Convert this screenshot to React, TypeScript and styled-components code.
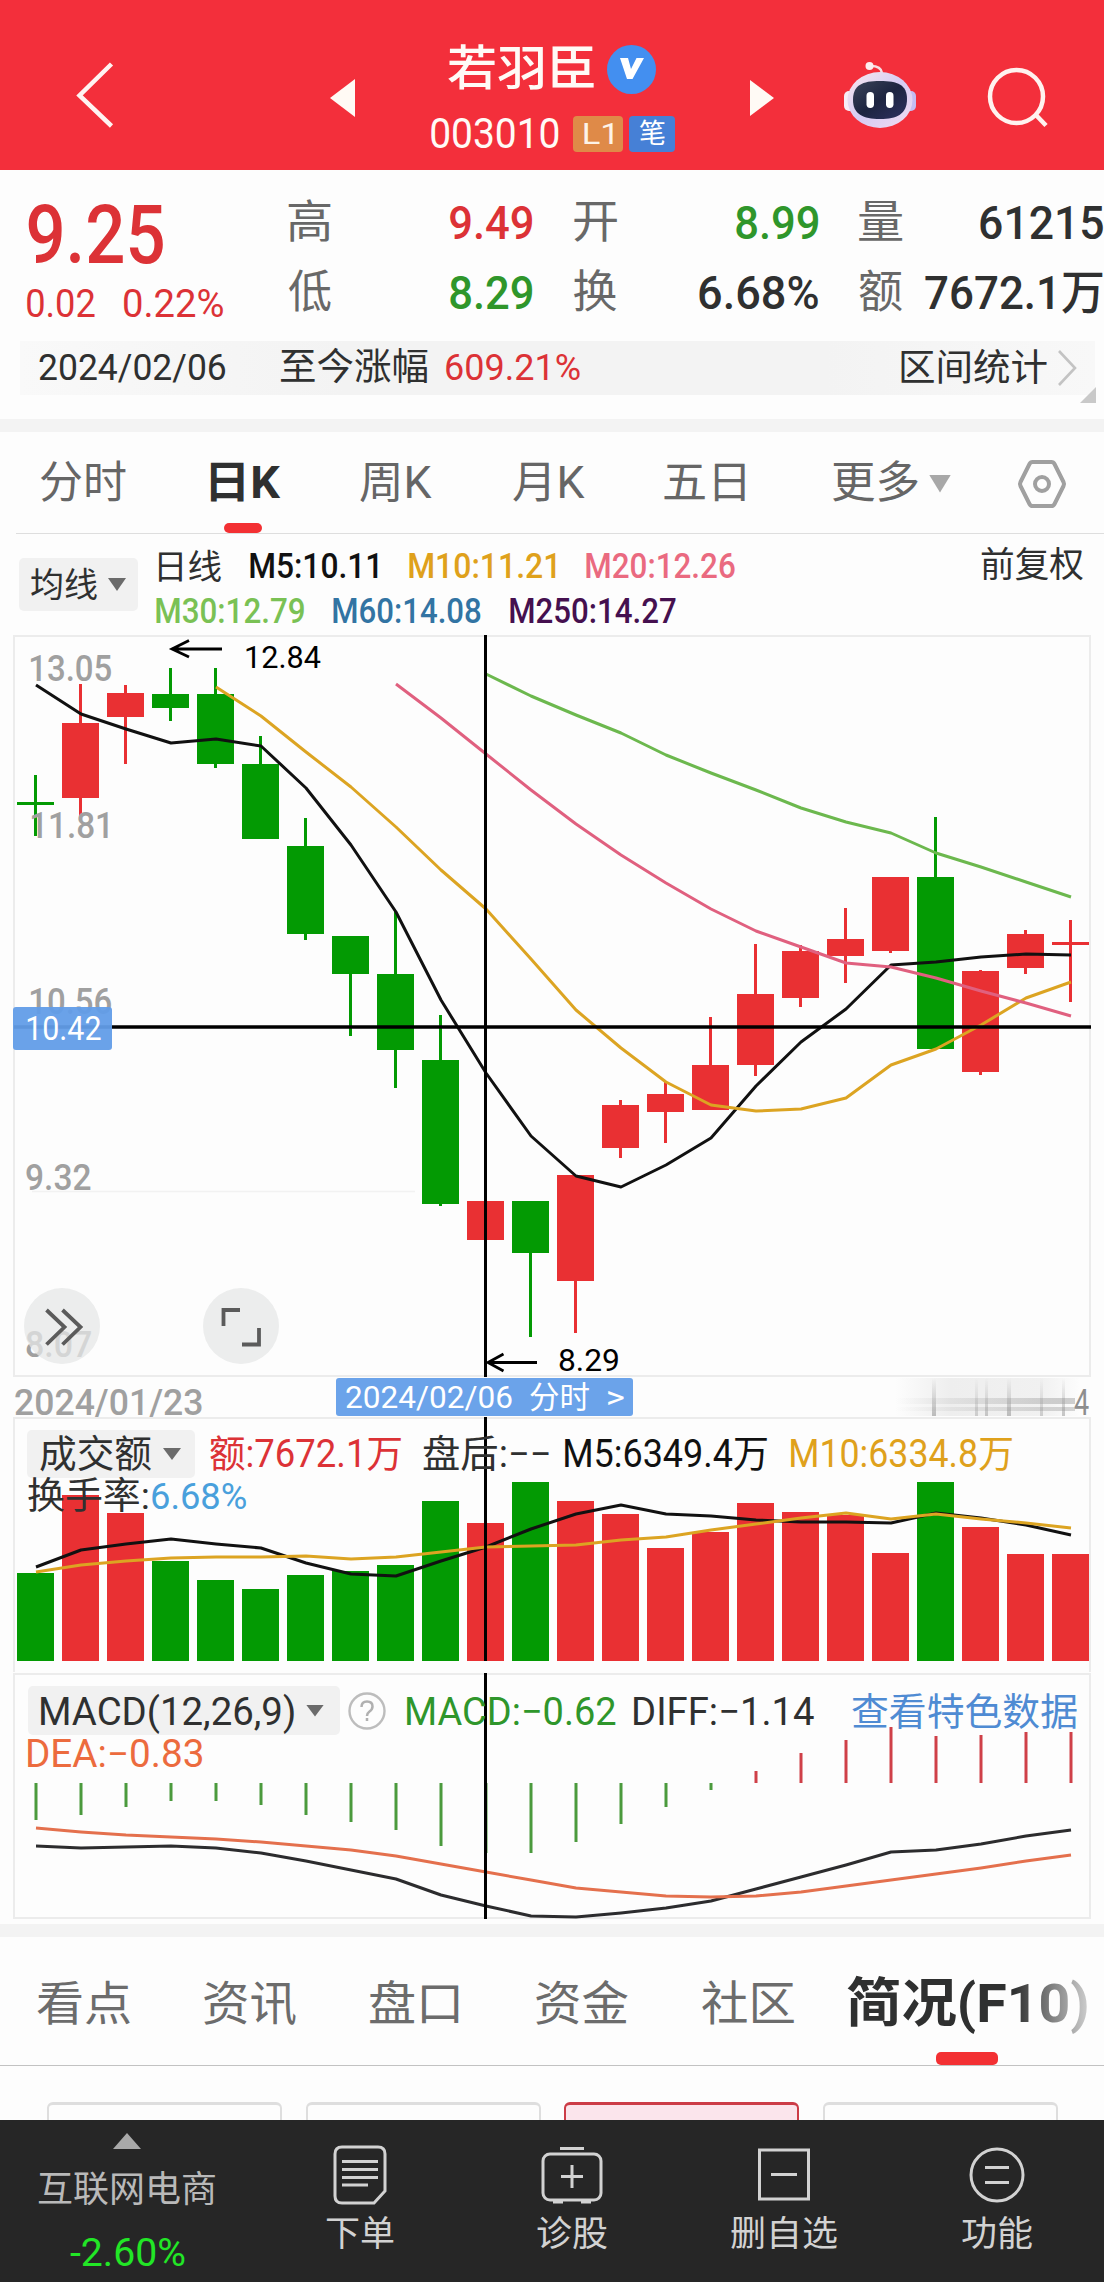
import React, { useLayoutEffect, useRef, useState } from "react";
import styled, { createGlobalStyle } from "styled-components";

const GlobalStyle = createGlobalStyle`
  * { box-sizing: border-box; }
  body { margin: 0; background: #fdfdfd; }
`;

const FONT = `Roboto, "Noto Sans CJK SC", sans-serif`;
const RED = "#dc3236";
const GREEN = "#2f962b";
const UP = "#e93033";
const DOWN = "#039a03";
const INK = "#2f3030";
const GOLD = "#dfa11c";
const FRAME = "#ececec";

/* ---------- text fitted to a given width ---------- */

const FitBox = styled.span<{ $w: number; $ml: number; $size: number; $color: string; $weight: number; $dy: number }>`
  display: block;
  flex: none;
  width: ${(p) => p.$w}px;
  height: ${(p) => Math.round(p.$size * 1.2)}px;
  line-height: ${(p) => Math.round(p.$size * 1.2)}px;
  margin-left: ${(p) => p.$ml}px;
  margin-top: ${(p) => p.$dy}px;
  font-size: ${(p) => p.$size}px;
  font-weight: ${(p) => p.$weight};
  color: ${(p) => p.$color};
`;

const FitInner = styled.span`
  display: inline-block;
  white-space: pre;
  transform-origin: 0 50%;
`;

type FitProps = { children: string; w: number; size: number; color?: string; weight?: number; ml?: number; dy?: number };

function Fit({ children, w, size, color = INK, weight = 400, ml = 0, dy = 0 }: FitProps) {
  const ref = useRef<HTMLSpanElement>(null);
  const [fit, setFit] = useState({ shift: 0, scale: 1 });
  useLayoutEffect(() => {
    const ctx = document.createElement("canvas").getContext("2d");
    if (!ctx || !ref.current) return;
    const cs = getComputedStyle(ref.current);
    ctx.font = `${cs.fontWeight} ${cs.fontSize} ${cs.fontFamily}`;
    const m = ctx.measureText(children);
    const scale = w / (m.actualBoundingBoxLeft + m.actualBoundingBoxRight);
    setFit({ shift: m.actualBoundingBoxLeft * scale, scale });
  }, [children, w]);
  return (
    <FitBox $w={w} $ml={ml} $size={size} $color={color} $weight={weight} $dy={dy}>
      <FitInner ref={ref} style={{ transform: `translateX(${fit.shift}px) scaleX(${fit.scale})` }}>
        {children}
      </FitInner>
    </FitBox>
  );
}

/* ---------- page ---------- */

const Page = styled.div`
  width: 1104px;
  height: 2282px;
  overflow: hidden;
  background: #fdfdfd;
  font-family: ${FONT};
  display: flex;
  flex-direction: column;
  > * { flex: none; }
`;

const Header = styled.header`
  height: 170px;
  background: #f32f3b;
  display: flex;
  align-items: flex-start;
`;

const Icon = styled.svg<{ $ml?: number; $mt?: number }>`
  display: block;
  flex: none;
  margin-left: ${(p) => p.$ml ?? 0}px;
  margin-top: ${(p) => p.$mt ?? 0}px;
  overflow: visible;
`;

const TitleBlock = styled.div`
  flex: none;
  width: 244px;
  margin-left: 75px;
  padding-top: 37px;
`;

const TitleRow = styled.div<{ $h: number; $pl: number }>`
  display: flex;
  align-items: center;
  height: ${(p) => p.$h}px;
  padding-left: ${(p) => p.$pl}px;
`;

const Verified = styled.span`
  width: 49px;
  height: 49px;
  margin-left: 13px;
  border-radius: 50%;
  background: #438ff0;
  display: flex;
  align-items: center;
  justify-content: center;
`;

const Tag = styled.span<{ $bg: string; $w: number; $ml: number }>`
  width: ${(p) => p.$w}px;
  height: 36px;
  margin-left: ${(p) => p.$ml}px;
  border-radius: 4px;
  background: ${(p) => p.$bg};
  display: flex;
  align-items: center;
  justify-content: center;
`;

/* ---------- quote ---------- */

const Quote = styled.section`
  height: 171px;
  display: flex;
  padding-top: 16px;
`;

const PriceBlock = styled.div`
  flex: none;
  width: 288px;
`;

const PriceRow = styled.div<{ $h: number }>`
  height: ${(p) => p.$h}px;
  display: flex;
  align-items: center;
`;

const StatColumn = styled.div`
  flex: none;
  width: 244px;
  margin-right: 41.5px;
  padding-top: 2px;
`;

const Stat = styled.div`
  height: 70px;
  display: flex;
  align-items: center;
  justify-content: space-between;
`;

const RangeBar = styled.div`
  height: 54px;
  margin: 0 9px 24px 20px;
  background: linear-gradient(90deg, #f9f9f9, #f3f3f3 30%, #f3f3f3 75%, #f8f8f8);
  display: flex;
  align-items: center;
  position: relative;
`;

const Corner = styled.span`
  position: absolute;
  right: -1px;
  bottom: -8px;
  width: 16px;
  height: 16px;
  background: #c9c9c9;
  clip-path: polygon(100% 0, 100% 100%, 0 100%);
`;

const Band = styled.div`
  height: 13px;
  background: #f3f3f3;
`;

/* ---------- tabs ---------- */

const Tabs = styled.nav`
  height: 102px;
  margin-left: 16px;
  padding-top: 2px;
  border-bottom: 1px solid #dedede;
  display: flex;
  align-items: center;
  position: relative;
`;

const Underline = styled.span<{ $x: number; $w: number; $h: number; $b: number }>`
  position: absolute;
  left: ${(p) => p.$x}px;
  bottom: ${(p) => p.$b}px;
  width: ${(p) => p.$w}px;
  height: ${(p) => p.$h}px;
  border-radius: 5px;
  background: #f33033;
`;

const Caret = styled.span<{ $w: number; $h: number; $ml: number; $color: string }>`
  flex: none;
  width: ${(p) => p.$w}px;
  height: ${(p) => p.$h}px;
  margin-left: ${(p) => p.$ml}px;
  background: ${(p) => p.$color};
  clip-path: polygon(0 0, 100% 0, 50% 100%);
`;

/* ---------- average line legend ---------- */

const AverageLegend = styled.section`
  height: 101px;
  display: flex;
  padding-top: 10px;
`;

const Selector = styled.button<{ $w: number; $h: number; $pl: number; $ml: number; $mt: number }>`
  flex: none;
  width: ${(p) => p.$w}px;
  height: ${(p) => p.$h}px;
  padding: 0 0 0 ${(p) => p.$pl}px;
  margin: ${(p) => p.$mt}px 0 0 ${(p) => p.$ml}px;
  border: 0;
  border-radius: 5px;
  background: #f1f1f1;
  font-family: inherit;
  display: flex;
  align-items: center;
  text-align: left;
`;

const LegendRows = styled.div`
  flex: 1;
`;

const LegendRow = styled.div<{ $h: number }>`
  height: ${(p) => p.$h}px;
  display: flex;
  align-items: center;
`;

/* ---------- chart panels ---------- */

const Panel = styled.section<{ $h: number }>`
  height: ${(p) => p.$h}px;
  display: grid;
  position: relative;
  > * { grid-area: 1 / 1; }
`;

const Plot = styled.svg`
  display: block;
`;

const PlotLabel = styled.span<{ $x: number; $y: number; $h: number }>`
  position: absolute;
  left: ${(p) => p.$x}px;
  top: ${(p) => p.$y}px;
  height: ${(p) => p.$h}px;
  display: flex;
  align-items: center;
`;

const CursorPrice = styled.span`
  position: absolute;
  left: 13px;
  top: 372px;
  width: 99px;
  height: 43px;
  border-radius: 3px;
  background: rgba(98, 157, 232, 0.95);
  display: flex;
  align-items: center;
`;

const RoundButton = styled.button<{ $x: number }>`
  position: absolute;
  left: ${(p) => p.$x}px;
  top: 653px;
  width: 76px;
  height: 76px;
  padding: 0;
  border: 0;
  border-radius: 50%;
  background: rgba(230, 231, 231, 0.75);
`;

const DateAxis = styled.div`
  height: 40px;
  display: flex;
  align-items: center;
`;

const CursorDate = styled.span`
  width: 297px;
  height: 38px;
  margin-left: 134px;
  border-radius: 3px;
  background: #6ba3ea;
  display: flex;
  align-items: center;
`;

const Smudge = styled.span`
  width: 185px;
  height: 38px;
  margin-left: 262px;
  background:
    linear-gradient(90deg, transparent, rgba(140, 140, 140, 0.4) 92%) 0 20px / 180px 6px no-repeat,
    linear-gradient(90deg, transparent, rgba(140, 140, 140, 0.35) 92%) 0 29px / 180px 4px no-repeat,
    linear-gradient(#fff0, #bbb) 37px 0 / 4px 38px no-repeat,
    linear-gradient(#fff0, #ccc) 80px 0 / 3px 38px no-repeat,
    linear-gradient(#fff0, #c4c4c4) 90px 0 / 3px 38px no-repeat,
    linear-gradient(#fff0, #bbb) 112px 0 / 4px 38px no-repeat,
    linear-gradient(#fff0, #ccc) 145px 0 / 3px 38px no-repeat,
    linear-gradient(#fff0, #c4c4c4) 167px 0 / 3px 38px no-repeat,
    linear-gradient(90deg, #fff0, #eeeeee 30%, #f1f1f1 80%, #fff0);
`;

const Legends = styled.div<{ $pt: number }>`
  padding-top: ${(p) => p.$pt}px;
`;

const CrossLine = styled.span<{ $h: number }>`
  width: 3px;
  height: ${(p) => p.$h}px;
  margin-left: 484px;
  background: #000;
`;

/* ---------- info tabs ---------- */

const InfoTabs = styled.nav`
  height: 129px;
  padding-top: 5px;
  border-bottom: 1px solid #c2c2c2;
  display: flex;
  align-items: center;
  position: relative;
`;

const FadeEdge = styled.span`
  position: absolute;
  right: 0;
  top: 30px;
  width: 90px;
  height: 80px;
  background: linear-gradient(90deg, #fdfdfd00, #fdfdfdee);
`;

const Cards = styled.div`
  height: 54px;
  padding: 36px 47px 0 47px;
  display: grid;
  grid-template-columns: repeat(4, 235px);
  column-gap: 23.5px;
  overflow: hidden;
`;

const Card = styled.div<{ $on?: boolean }>`
  height: 60px;
  border: 3px solid ${(p) => (p.$on ? "#cc3c47" : "#dedede")};
  border-left-width: 2px;
  border-right-width: 2px;
  border-radius: 6px;
  background: ${(p) => (p.$on ? "#fbe5ec" : "transparent")};
`;

/* ---------- bottom bar ---------- */

const BottomBar = styled.footer`
  height: 162px;
  background: #262626;
  display: flex;
`;

const Sector = styled.div`
  width: 255px;
  display: flex;
  flex-direction: column;
`;

const Action = styled.div<{ $w: number }>`
  width: ${(p) => p.$w}px;
  display: flex;
  flex-direction: column;
  align-items: center;
`;

const ActionIcon = styled.div`
  height: 92px;
  padding-top: 18px;
  display: flex;
  align-items: center;
`;

/* ---------- data ---------- */

const STEP = 45;
const cx = (i: number) => 35.5 + STEP * i;

// [rising, high, top of body, bottom of body, low] in plot pixels
const CANDLES: [number, number, number, number, number][] = [
  [0, 775, 802, 805, 836], [1, 684, 723, 798, 818], [1, 685, 693, 717, 764], [0, 668, 694, 708, 721],
  [0, 668, 694, 764, 768], [0, 736, 764, 839, 839], [0, 818, 846, 934, 940], [0, 936, 936, 974, 1036],
  [0, 912, 974, 1050, 1088], [0, 1015, 1060, 1204, 1206], [1, 1201, 1201, 1240, 1240], [0, 1201, 1201, 1253, 1337],
  [1, 1175, 1175, 1281, 1333], [1, 1100, 1105, 1148, 1158], [1, 1082, 1094, 1112, 1143], [1, 1017, 1065, 1110, 1110],
  [1, 944, 994, 1065, 1076], [1, 945, 951, 998, 1007], [1, 908, 939, 956, 983], [1, 877, 877, 951, 953],
  [0, 817, 877, 1049, 1049], [1, 970, 971, 1072, 1075], [1, 930, 934, 968, 974], [1, 920, 942, 945, 1002],
];
const MA5 = [685, 714, 729, 743, 739, 746, 788, 845, 912, 1000, 1073, 1136, 1176, 1187, 1165, 1138, 1086, 1042, 1009, 965, 962, 957, 954, 955];
const MA10 = [687, 716, 752, 787, 827, 870, 909, 959, 1010, 1048, 1082, 1105, 1111, 1109, 1098, 1065, 1049, 1025, 998, 982];
const MA20 = [684, 718, 754, 790, 824, 855, 883, 909, 931, 947, 963, 967, 978, 991, 1003, 1016];
const MA30 = [674, 696, 715, 733, 755, 773, 790, 808, 822, 833, 853, 867, 882, 897];

const VOLUME = [1573, 1495, 1513, 1561, 1580, 1589, 1575, 1571, 1565, 1501, 1523, 1482, 1501, 1514, 1548, 1532, 1503, 1512, 1515, 1553, 1482, 1527, 1554, 1554];
const VOL5 = [1567, 1550, 1544, 1539, 1544, 1548, 1563, 1574, 1576, 1561, 1547, 1529, 1514, 1505, 1514, 1516, 1520, 1522, 1522, 1523, 1513, 1518, 1525, 1535];
const VOL10 = [1572, 1565, 1561, 1558, 1557, 1557, 1556, 1559, 1557, 1552, 1547, 1546, 1545, 1540, 1537, 1530, 1524, 1518, 1513, 1519, 1514, 1519, 1523, 1528];

const MACD = [1820, 1815, 1807, 1801, 1801, 1805, 1815, 1822, 1830, 1846, 1853, 1853, 1842, 1824, 1807, 1790, 1771, 1753, 1740, 1727, 1736, 1735, 1732, 1732];
const DIFF = [1846, 1848, 1847, 1846, 1848, 1853, 1861, 1870, 1879, 1895, 1906, 1916, 1917, 1913, 1908, 1901, 1889, 1877, 1865, 1852, 1850, 1844, 1836, 1830];
const DEA = [1828, 1832, 1835, 1837, 1839, 1842, 1846, 1850, 1856, 1864, 1872, 1880, 1888, 1892, 1896, 1897, 1896, 1892, 1886, 1880, 1874, 1868, 1861, 1855];

function Curve({ ys, from = 0, color, width = 3 }: { ys: number[]; from?: number; color: string; width?: number }) {
  const points = ys.map((y, i) => `${cx(i + from) + 0.5},${y}`).join(" ");
  return <polyline points={points} fill="none" stroke={color} strokeWidth={width} strokeLinejoin="round" />;
}

/* ---------- sections ---------- */

function TopBar() {
  return (
    <Header>
      <Icon $ml={75} $mt={60} width={40} height={70} viewBox="75 60 40 70" fill="none" stroke="#fff4f2" strokeWidth={4.5}>
        <path d="M111.500 64L79.500 95.500L111.500 126" />
      </Icon>
      <Icon $ml={215} $mt={78} width={26} height={40} viewBox="330 78 26 40" fill="#fffaf5">
        <path d="M330 98L355 79V117Z" />
      </Icon>
      <TitleBlock>
        <TitleRow $h={64} $pl={17}>
          <Fit w={146} size={48} weight={500} color="#fffaf6">若羽臣</Fit>
          <Verified>
            <svg width="26" height="22" viewBox="0 0 26 22">
              <path d="M1 0H9L12 11L17.500 0H25L13.500 21H8Z" fill="#fff" />
            </svg>
          </Verified>
        </TitleRow>
        <TitleRow $h={66} $pl={0}>
          <Fit w={128} size={42} color="#fffaf6">003010</Fit>
          <Tag $bg="#df8a48" $w={50} $ml={14}>
            <Fit w={29} size={30} color="#fdf3e8">L1</Fit>
          </Tag>
          <Tag $bg="#4680d6" $w={46} $ml={6}>
            <Fit w={26} size={27} color="#fff">笔</Fit>
          </Tag>
        </TitleRow>
      </TitleBlock>
      <Icon $ml={75} $mt={78} width={26} height={40} viewBox="750 78 26 40" fill="#fffaf5">
        <path d="M774 98L750 80V116Z" />
      </Icon>
      <Icon $ml={68} $mt={60} width={74} height={70} viewBox="844 60 74 70">
        <defs>
          <linearGradient id="shell" x1="0" y1="0" x2="1" y2="1">
            <stop offset="0" stopColor="#fbe9ee" />
            <stop offset="0.5" stopColor="#d5ccf3" />
            <stop offset="1" stopColor="#f3dcf0" />
          </linearGradient>
          <linearGradient id="visor" x1="0" y1="0" x2="1" y2="1">
            <stop offset="0" stopColor="#3b4458" />
            <stop offset="0.5" stopColor="#1d2440" />
            <stop offset="1" stopColor="#2e3160" />
          </linearGradient>
        </defs>
        <path d="M882 73Q881 66 871 66" fill="none" stroke="#f6dfe4" strokeWidth="2.500" />
        <circle cx="869.500" cy="66" r="4" fill="#fdeef0" />
        <rect x="844" y="91" width="12" height="20" rx="5" fill="#f7edf7" />
        <rect x="904" y="91" width="12" height="20" rx="5" fill="#c4bdf2" />
        <ellipse cx="880" cy="100" rx="32.500" ry="28" fill="url(#shell)" />
        <path d="M853 100C853 85 862 81 880 81C898 81 907 85 907 99C907 114 897 119 880 119C863 119 853 114 853 100Z" fill="url(#visor)" />
        <rect x="866.500" y="92" width="7.500" height="16" rx="3.700" fill="#fff" />
        <rect x="886" y="92" width="7.500" height="16" rx="3.700" fill="#fff" />
      </Icon>
      <Icon $ml={68} $mt={64} width={66} height={66} viewBox="986 64 66 66" fill="none" stroke="#fff2ef" strokeWidth={4.5}>
        <circle cx="1016.500" cy="96.500" r="26.500" />
        <path d="M1035 114L1046 125.500" />
      </Icon>
    </Header>
  );
}

function StatCell({ label, w, color, children }: { label: string; w: number; color: string; children: string }) {
  return (
    <Stat>
      <Fit w={43} size={45} color="#686868">{label}</Fit>
      <Fit w={w} size={47} weight={500} color={color}>{children}</Fit>
    </Stat>
  );
}

function QuoteSummary() {
  return (
    <Quote>
      <PriceBlock>
        <PriceRow $h={98}>
          <Fit w={135} size={81} weight={500} ml={28} color={RED}>9.25</Fit>
        </PriceRow>
        <PriceRow $h={40}>
          <Fit w={68} size={39} ml={27} color={RED}>0.02</Fit>
          <Fit w={99} size={39} ml={29} color={RED}>0.22%</Fit>
        </PriceRow>
      </PriceBlock>
      <StatColumn>
        <StatCell label="高" w={82} color={RED}>9.49</StatCell>
        <StatCell label="低" w={82} color={GREEN}>8.29</StatCell>
      </StatColumn>
      <StatColumn>
        <StatCell label="开" w={82} color={GREEN}>8.99</StatCell>
        <StatCell label="换" w={119} color={INK}>6.68%</StatCell>
      </StatColumn>
      <StatColumn>
        <StatCell label="量" w={123} color={INK}>61215</StatCell>
        <StatCell label="额" w={178} color={INK}>7672.1万</StatCell>
      </StatColumn>
    </Quote>
  );
}

function RangeSummary() {
  return (
    <RangeBar>
      <Fit w={187} size={37} ml={19}>2024/02/06</Fit>
      <Fit w={148} size={37} ml={54}>至今涨幅</Fit>
      <Fit w={134} size={37} ml={18} color={RED}>609.21%</Fit>
      <Fit w={146} size={37} ml={321} dy={2}>区间统计</Fit>
      <Icon $ml={11} width={20} height={38} viewBox="0 0 20 38" fill="none" stroke="#c3c3c3" strokeWidth={2.6}>
        <path d="M1 2L17 19L1 36" />
      </Icon>
      <Corner />
    </RangeBar>
  );
}

function PeriodTabs() {
  const grey = "#666";
  return (
    <Tabs>
      <Fit w={86} size={44} ml={24} color={grey}>分时</Fit>
      <Fit w={71} size={44} ml={84} weight={700}>日K</Fit>
      <Fit w={72} size={44} ml={79} color={grey}>周K</Fit>
      <Fit w={72} size={44} ml={81} color={grey}>月K</Fit>
      <Fit w={81} size={44} ml={79} color={grey}>五日</Fit>
      <Fit w={85} size={44} ml={88} color={grey}>更多</Fit>
      <Caret $w={22} $h={18} $ml={11} $color="#a8a8a8" />
      <Icon $ml={67} width={48} height={48} viewBox="0 0 48 48" fill="none" stroke="#a0a0a0" strokeWidth={4}>
        <path d="M14.500 2H33.500Q35.500 2 36.500 4L45.500 22Q46.500 24 45.500 26L36.500 44Q35.500 46 33.500 46H14.500Q12.500 46 11.500 44L2.500 26Q1.500 24 2.500 22L11.500 4Q12.500 2 14.500 2Z" />
        <circle cx="24" cy="24" r="7" />
      </Icon>
      <Underline $x={208} $w={38} $h={10} $b={0} />
    </Tabs>
  );
}

function Averages() {
  return (
    <AverageLegend>
      <Selector $w={119} $h={53} $pl={12} $ml={19} $mt={14}>
        <Fit w={66} size={34} dy={2}>均线</Fit>
        <Caret $w={18} $h={13} $ml={11} $color="#6b6b6b" />
      </Selector>
      <LegendRows>
        <LegendRow $h={46}>
          <Fit w={63} size={34} ml={20}>日线</Fit>
          <Fit w={128} size={35} ml={29} weight={500} color="#111">M5:10.11</Fit>
          <Fit w={147} size={35} ml={31} weight={500} color={GOLD}>M10:11.21</Fit>
          <Fit w={149} size={35} ml={30} weight={500} color="#ea6a80">M20:12.26</Fit>
          <Fit w={102} size={35} ml={246} dy={-3}>前复权</Fit>
        </LegendRow>
        <LegendRow $h={44}>
          <Fit w={148} size={35} ml={18} weight={500} color="#7ac154">M30:12.79</Fit>
          <Fit w={148} size={35} ml={29} weight={500} color="#3274a3">M60:14.08</Fit>
          <Fit w={166} size={35} ml={29} weight={500} color="#45104f">M250:14.27</Fit>
        </LegendRow>
      </LegendRows>
    </AverageLegend>
  );
}

function PricePanel() {
  return (
    <Panel $h={742}>
      <Plot width={1104} height={742} viewBox="0 635 1104 742">
        <rect x={14} y={636} width={1076} height={740} fill="none" stroke={FRAME} strokeWidth={2} />
        <path d="M32 1191.500H415" stroke="#f2f2f2" strokeWidth={1.5} />
        {CANDLES.map(([up, high, top, bottom, low], i) => (
          <g key={i} fill={up ? UP : DOWN}>
            <rect x={cx(i) - 1.5} y={high} width={3} height={low - high} />
            <rect x={cx(i) - 18.5} y={top} width={37} height={bottom - top} />
          </g>
        ))}
        <Curve ys={MA5} color="#111" />
        <Curve ys={MA10} from={4} color="#dca422" />
        <Curve ys={MA20} from={8} color="#e0607f" />
        <Curve ys={MA30} from={10} color="#6cb84e" />
        <g stroke="#000" strokeWidth={2.8} fill="none">
          <path d="M222 649H172M189 640.500L172 649L189 657" />
          <path d="M537 1362.500H488M503.500 1354L488 1362.500L503.500 1371" />
          <path d="M14 1027H1091" strokeWidth={3.4} />
        </g>
      </Plot>
      <CrossLine $h={742} />
      <PlotLabel $x={246} $y={2} $h={40}><Fit w={75} size={32} color="#000">12.84</Fit></PlotLabel>
      <PlotLabel $x={30} $y={14} $h={40}><Fit w={81} size={36} weight={500} color="#a0a0a0">13.05</Fit></PlotLabel>
      <PlotLabel $x={31} $y={171} $h={40}><Fit w={77} size={36} weight={500} color="#a0a0a0">11.81</Fit></PlotLabel>
      <PlotLabel $x={30} $y={347} $h={40}><Fit w={81} size={36} weight={500} color="#a0a0a0">10.56</Fit></PlotLabel>
      <PlotLabel $x={26} $y={523} $h={40}><Fit w={65} size={36} weight={500} color="#a0a0a0">9.32</Fit></PlotLabel>
      <PlotLabel $x={26} $y={690} $h={40}><Fit w={65} size={36} weight={500} color="#a0a0a0">8.07</Fit></PlotLabel>
      <PlotLabel $x={559} $y={705} $h={40}><Fit w={59} size={32} color="#000">8.29</Fit></PlotLabel>
      <CursorPrice><Fit w={74} size={33} ml={14} color="#fff">10.42</Fit></CursorPrice>
      <RoundButton $x={24}>
        <svg width="76" height="76" viewBox="24 1288 76 76" fill="none" stroke="#5b5b5b" strokeWidth="3.800">
          <path d="M46.500 1310L64.500 1327L46.500 1344.500M62.500 1310L80.500 1327L62.500 1344.500" />
        </svg>
      </RoundButton>
      <RoundButton $x={203}>
        <svg width="76" height="76" viewBox="203 1288 76 76" fill="none" stroke="#5b5b5b" strokeWidth="3.800">
          <path d="M240 1310H223.500V1326M259 1328V1344.500H242" />
        </svg>
      </RoundButton>
    </Panel>
  );
}

function Dates() {
  return (
    <DateAxis>
      <Fit w={187} size={36} ml={15} dy={13} weight={500} color="#a0a0a0">2024/01/23</Fit>
      <CursorDate>
        <Fit w={166} size={32} ml={10} color="#fff">2024/02/06</Fit>
        <Fit w={59} size={31} ml={18} color="#fff">分时</Fit>
        <Fit w={16} size={32} ml={19} color="#fff">&gt;</Fit>
      </CursorDate>
      <Smudge />
      <Fit w={15} size={36} ml={-6} dy={13} color="#8e8e8e">4</Fit>
    </DateAxis>
  );
}

function VolumePanel() {
  return (
    <Panel $h={256}>
      <Plot width={1104} height={256} viewBox="0 1417 1104 256">
        <path d="M14 1672V1418H1090V1672" fill="none" stroke={FRAME} strokeWidth={2} />
        {VOLUME.map((y, i) => (
          <rect key={i} x={cx(i) - 18.5} y={y} width={37} height={1661 - y} fill={CANDLES[i][0] ? UP : DOWN} />
        ))}
        <Curve ys={VOL5} color="#111" />
        <Curve ys={VOL10} color="#dca422" />
      </Plot>
      <Legends $pt={13}>
        <LegendRow $h={48}>
          <Selector $w={168} $h={48} $pl={13} $ml={27} $mt={0}>
            <Fit w={111} size={38}>成交额</Fit>
            <Caret $w={18} $h={12} $ml={12} $color="#6b6b6b" />
          </Selector>
          <Fit w={191} size={38} ml={15} color={RED}>额:7672.1万</Fit>
          <Fit w={126} size={38} ml={22}>盘后:−−</Fit>
          <Fit w={202} size={38} ml={16} color="#111">M5:6349.4万</Fit>
          <Fit w={221} size={38} ml={24} color={GOLD}>M10:6334.8万</Fit>
        </LegendRow>
        <LegendRow $h={38}>
          <Fit w={120} size={37} ml={28}>换手率:</Fit>
          <Fit w={94} size={36} ml={4} color="#49a0dc">6.68%</Fit>
        </LegendRow>
      </Legends>
      <CrossLine $h={244} />
    </Panel>
  );
}

function MacdPanel() {
  return (
    <Panel $h={251}>
      <Plot width={1104} height={251} viewBox="0 1673 1104 251">
        <path d="M14 1918V1674H1090V1918Z" fill="none" stroke={FRAME} strokeWidth={2} />
        {MACD.map((y, i) => (
          <rect key={i} x={cx(i) - 1} y={Math.min(y, 1783)} width={3} height={Math.abs(y - 1783)} fill={y > 1783 ? "#4b9a3d" : "#cf4048"} />
        ))}
        <Curve ys={DIFF} color="#2c2c2e" />
        <Curve ys={DEA} color="#e4704d" />
      </Plot>
      <Legends $pt={13}>
        <LegendRow $h={49}>
          <Selector $w={312} $h={49} $pl={13} $ml={28} $mt={0}>
            <Fit w={253} size={38} dy={3}>MACD(12,26,9)</Fit>
            <Caret $w={18} $h={12} $ml={12} $color="#6b6b6b" />
          </Selector>
          <Icon $ml={8} width={38} height={38} viewBox="0 0 38 38">
            <circle cx="19" cy="19" r="17.500" fill="none" stroke="#bdbdbd" strokeWidth="2.400" />
            <path d="M13.500 15Q13.500 9.500 19 9.500Q24.500 9.500 24.500 14.500Q24.500 17.500 21.500 19.500Q19 21.300 19 24M19 26V29" fill="none" stroke="#b0b0b0" strokeWidth="2.500" />
          </Icon>
          <Fit w={209} size={38.5} ml={21} dy={2} color={GREEN}>MACD:−0.62</Fit>
          <Fit w={180} size={38.5} ml={18} dy={2}>DIFF:−1.14</Fit>
          <Fit w={225} size={38} ml={38} dy={2} color="#4f8bd3">查看特色数据</Fit>
        </LegendRow>
        <LegendRow $h={38}>
          <Fit w={174} size={38} ml={28} color="#ec6b3e">DEA:−0.83</Fit>
        </LegendRow>
      </Legends>
      <CrossLine $h={246} />
    </Panel>
  );
}

function Sections() {
  const grey = "#6c6c6c";
  return (
    <InfoTabs>
      <Fit w={93} size={47} ml={37} color={grey}>看点</Fit>
      <Fit w={92} size={47} ml={74} color={grey}>资讯</Fit>
      <Fit w={89} size={47} ml={74} color={grey}>盘口</Fit>
      <Fit w={92} size={47} ml={77} color={grey}>资金</Fit>
      <Fit w={92} size={47} ml={74} color={grey}>社区</Fit>
      <Fit w={240} size={53} ml={53} weight={700}>简况(F10)</Fit>
      <FadeEdge />
      <Underline $x={936} $w={62} $h={13} $b={0} />
    </InfoTabs>
  );
}

function BottomNav() {
  const grey = "#d2d2d2";
  return (
    <BottomBar>
      <Sector>
        <Icon $ml={113} $mt={13} width={28} height={16} viewBox="0 0 28 16" fill="#a9a9a9">
          <path d="M14 0L28 16H0Z" />
        </Icon>
        <Fit w={177} size={36} ml={38} dy={20} color="#b9b9b9">互联网电商</Fit>
        <Fit w={115} size={38} ml={70} dy={18} color="#22e626">-2.60%</Fit>
      </Sector>
      <Action $w={210}>
        <ActionIcon>
          <svg width="54" height="60" viewBox="0 0 54 60" fill="none" stroke={grey} strokeWidth="3">
            <path d="M9 2H45Q52 2 52 9V46L41 58H9Q2 58 2 51V9Q2 2 9 2Z" />
            <path d="M9 16.500H45M9 24.500H45M9 32.500H45M9 40H35" />
          </svg>
        </ActionIcon>
        <Fit w={68} size={35} dy={2} color={grey}>下单</Fit>
      </Action>
      <Action $w={214}>
        <ActionIcon>
          <svg width="62" height="60" viewBox="0 0 62 60" fill="none" stroke={grey} strokeWidth="3">
            <rect x="2" y="9" width="58" height="46" rx="7" />
            <path d="M19 3.500H43M31 20V43M20 31.500H42M12 57H22M40 57H50" />
          </svg>
        </ActionIcon>
        <Fit w={70} size={35} dy={2} color={grey}>诊股</Fit>
      </Action>
      <Action $w={210}>
        <ActionIcon>
          <svg width="52" height="56" viewBox="0 0 52 56" fill="none" stroke={grey} strokeWidth="3">
            <rect x="1.500" y="3" width="49" height="49" />
            <path d="M13 27.500H39" />
          </svg>
        </ActionIcon>
        <Fit w={106} size={35} dy={2} color={grey}>删自选</Fit>
      </Action>
      <Action $w={215}>
        <ActionIcon>
          <svg width="56" height="56" viewBox="0 0 56 56" fill="none" stroke={grey} strokeWidth="3">
            <circle cx="28" cy="28" r="26" />
            <path d="M16 20.500H40M16 35.500H40" />
          </svg>
        </ActionIcon>
        <Fit w={70} size={35} dy={2} color={grey}>功能</Fit>
      </Action>
    </BottomBar>
  );
}

export default function App() {
  return (
    <Page>
      <GlobalStyle />
      <TopBar />
      <QuoteSummary />
      <RangeSummary />
      <Band />
      <PeriodTabs />
      <Averages />
      <PricePanel />
      <Dates />
      <VolumePanel />
      <MacdPanel />
      <Band />
      <Sections />
      <Cards>
        <Card />
        <Card />
        <Card $on />
        <Card />
      </Cards>
      <BottomNav />
    </Page>
  );
}
